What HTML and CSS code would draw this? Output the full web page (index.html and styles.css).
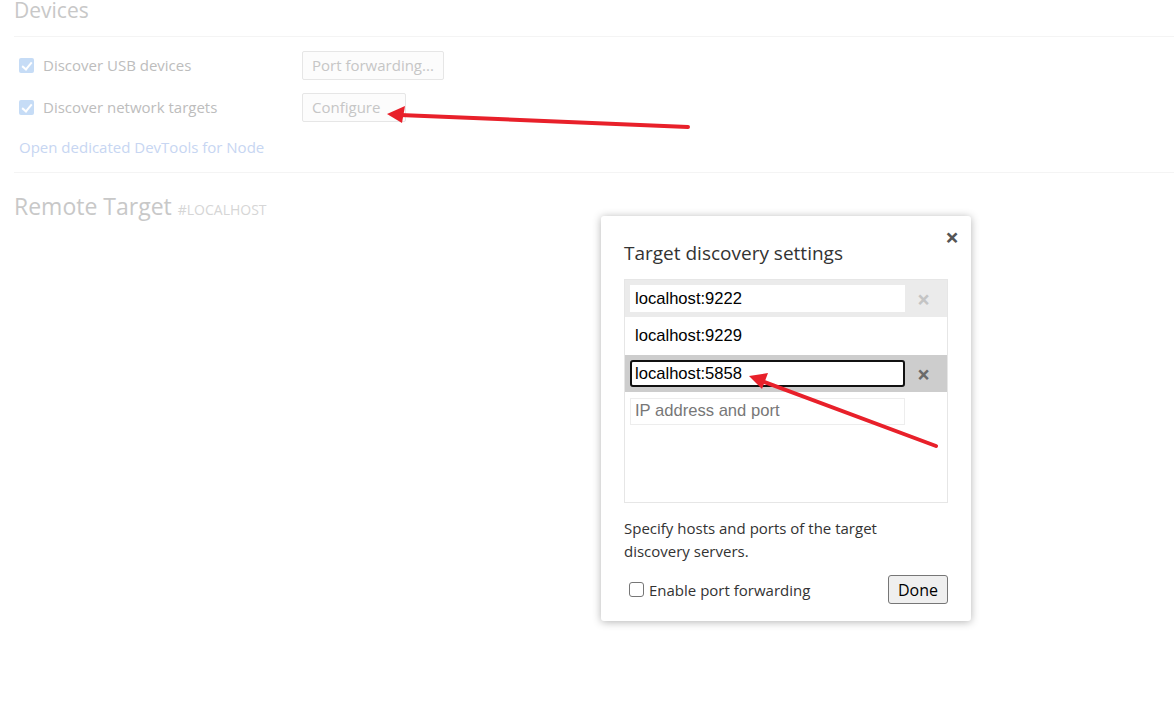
FILE: index.html
```html
<!DOCTYPE html>
<html lang="en">
<head>
<meta charset="UTF-8">
<title>Devices</title>
<link rel="stylesheet" href="styles.css">
</head>
<body>
<div class="page">
  <h1 class="title devices-title">Devices</h1>
  <div class="section">
    <div class="row">
      <label class="check-label"><span class="fake-check"></span>Discover USB devices</label>
      <button class="page-btn">Port forwarding...</button>
    </div>
    <div class="row">
      <label class="check-label"><span class="fake-check"></span>Discover network targets</label>
      <button class="page-btn configure">Configure</button>
    </div>
    <a class="node-link">Open dedicated DevTools for Node</a>
  </div>
  <h1 class="title remote-title">Remote Target <span class="host">#LOCALHOST</span></h1>
</div>

<!-- 대화상자 -->
<div class="dialog">
  <span class="dialog-close">&times;</span>
  <h2 class="dialog-title">Target discovery settings</h2>
  <div class="list">
    <div class="list-item hovered">
      <input class="item-input" type="text" value="localhost:9222">
      <span class="item-x">&times;</span>
    </div>
    <div class="list-item tall">
      <span class="item-text">localhost:9229</span>
    </div>
    <div class="list-item selected">
      <input class="item-input focused" type="text" value="localhost:5858">
      <span class="item-x dark">&times;</span>
    </div>
    <div class="list-item tall">
      <input class="item-input empty" type="text" placeholder="IP address and port">
    </div>
  </div>
  <p class="dialog-desc">Specify hosts and ports of the target discovery servers.</p>
  <div class="dialog-footer">
    <label class="fwd-label"><span class="box"></span>Enable port forwarding</label>
    <button class="done-btn">Done</button>
  </div>
</div>

<!-- 빨간 화살표 -->
<svg class="arrows" width="1174" height="701" viewBox="0 0 1174 701">
  <line x1="688" y1="127" x2="400" y2="115" stroke="#e8202a" stroke-width="4" stroke-linecap="round"/>
  <polygon points="387,114 405,106 402,123" fill="#e8202a"/>
  <line x1="936" y1="446" x2="762" y2="381" stroke="#e8202a" stroke-width="4" stroke-linecap="round"/>
  <polygon points="749,376 768,373 762,389" fill="#e8202a"/>
</svg>
</body>
</html>
```

FILE: styles.css
```css
html, body {
    margin: 0;
    padding: 0;
    background: #fff;
    font-family: "Open Sans", "Noto Sans", sans-serif;
    overflow: hidden;
}

.page {
    padding-left: 14px;
    width: 1160px;
}

/* 제목 */
.title {
    font-weight: normal;
    color: #c8c8c8;
    margin: 0;
    border-bottom: 1px solid #f4f4f4;
}

.devices-title {
    font-size: 21px;
    line-height: 26px;
    margin-top: -3px;
    padding-bottom: 13px;
}

.remote-title {
    font-size: 23px;
    line-height: 30px;
    padding-top: 18px;
    border-bottom: none;
}

.host {
    font-size: 14px;
    color: #d6d6d6;
}

.section {
    padding: 7px 0 0 5px;
    height: 136px;
    box-sizing: border-box;
    border-bottom: 1px solid #f4f4f4;
}

.row {
    display: flex;
    align-items: center;
    height: 42px;
}

.check-label {
    display: flex;
    align-items: center;
    width: 283px;
    font-size: 15px;
    color: #bdbdbd;
}

.fake-check {
    width: 15px;
    height: 15px;
    border-radius: 2px;
    background: #c6dcf6;
    margin-right: 9px;
    position: relative;
}

.fake-check::after {
    content: "";
    position: absolute;
    left: 5px;
    top: 2px;
    width: 4px;
    height: 8px;
    border: solid #fff;
    border-width: 0 2px 2px 0;
    transform: rotate(40deg);
}

.page-btn {
    font-family: inherit;
    font-size: 15px;
    color: #c6c6c6;
    background: #fcfcfc;
    border: 1px solid #e6e6e6;
    border-radius: 2px;
    height: 29px;
    padding: 0 9px;
}

.page-btn.configure {
    width: 104px;
    text-align: left;
}

.node-link {
    display: block;
    font-size: 15px;
    line-height: 20px;
    color: #c7d6f2;
    padding-top: 9px;
}

/* 대화상자 */
.dialog {
    position: absolute;
    left: 601px;
    top: 216px;
    width: 324px;
    padding: 22px 23px 17px 23px;
    background: #fff;
    border-radius: 3px;
    box-shadow: 0 1px 8px rgba(0, 0, 0, 0.3);
    font-family: "Open Sans", "Noto Sans", sans-serif;
    color: #333;
}

.dialog-close {
    position: absolute;
    right: 12px;
    top: 4px;
    font-size: 24px;
    font-weight: bold;
    color: #555;
}

.dialog-title {
    font-size: 19px;
    font-weight: normal;
    margin: 0 0 11px;
    line-height: 30px;
}

.list {
    border: 1px solid #e6e6e6;
    height: 222px;
}

.list-item {
    display: flex;
    align-items: center;
    height: 37px;
    padding: 0 5px;
}

.list-item.tall {
    height: 38px;
}

.list-item.hovered {
    background: #ebebeb;
}

.list-item.selected {
    background: #cdcdcd;
}

.item-input {
    width: 275px;
    height: 27px;
    box-sizing: border-box;
    border: 1px solid #fff;
    border-radius: 0;
    padding: 0 4px;
    font-family: "Liberation Sans", Arial, sans-serif;
    font-size: 16.6px;
    color: #000;
    background: #fff;
}

.item-input.focused {
    border: 2px solid #111;
    border-radius: 3px;
    padding: 0 3px;
}

.item-input.empty {
    border: 1px solid #ededed;
}

.item-input::placeholder {
    color: #777;
}

.item-text {
    font-family: "Liberation Sans", Arial, sans-serif;
    font-size: 16.6px;
    color: #000;
    padding-left: 5px;
}

.item-x {
    flex: 1;
    text-align: center;
    font-size: 23px;
    font-weight: bold;
    color: #c4c4c4;
}

.item-x.dark {
    color: #6a6a6a;
}

.dialog-desc {
    font-size: 15px;
    line-height: 23px;
    margin: 14px 0 12px;
    width: 290px;
}

.dialog-footer {
    display: flex;
    justify-content: space-between;
    align-items: center;
}

.fwd-label {
    display: flex;
    align-items: center;
    font-size: 15px;
    padding-left: 5px;
}

.box {
    width: 13px;
    height: 13px;
    border: 1px solid #767676;
    border-radius: 3px;
    margin-right: 5px;
}

.done-btn {
    font-family: inherit;
    font-size: 16px;
    color: #000;
    background: #efefef;
    border: 1px solid #767676;
    border-radius: 3px;
    width: 60px;
    height: 29px;
    padding: 0;
}

.arrows {
    position: absolute;
    left: 0;
    top: 0;
    pointer-events: none;
}
```
